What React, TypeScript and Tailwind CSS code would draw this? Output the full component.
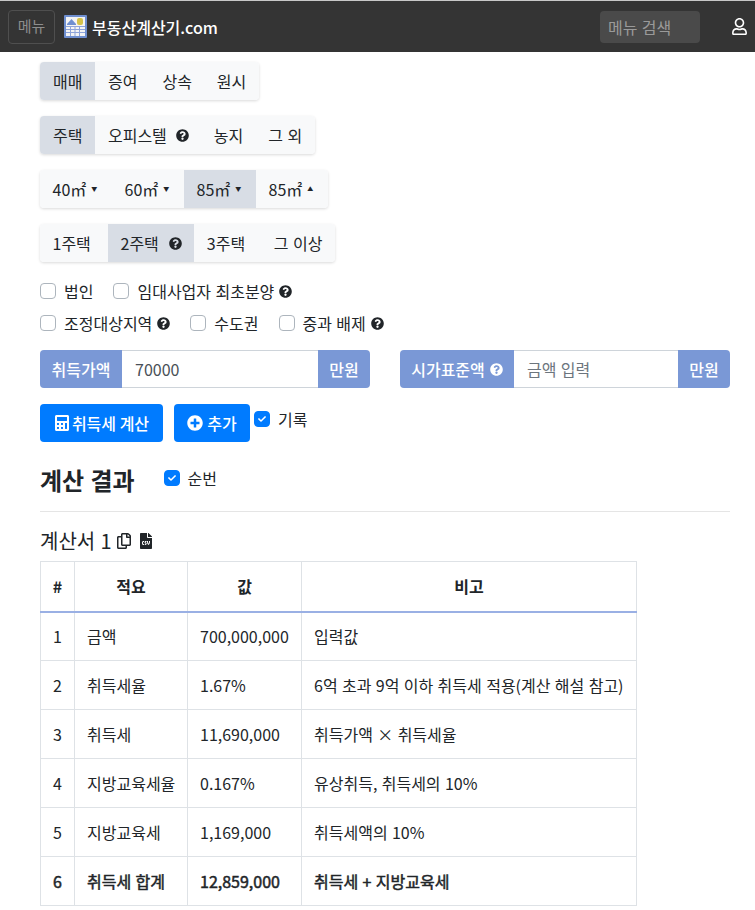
import { FaCalculator, FaCheck, FaFileCsv, FaPlusCircle, FaQuestionCircle, FaRegCopy, FaRegUser } from "react-icons/fa";

const FONT = "font-['Noto_Sans_CJK_KR','Noto_Sans',sans-serif]";

const Help = ({ className = "" }: { className?: string }) => (
  <FaQuestionCircle size={13} className={`inline-block text-[#212529] ${className}`} />
);

function Logo() {
  return (
    <svg width="23" height="23" viewBox="0 0 23 23" className="shrink-0">
      <rect width="23" height="23" rx="1" fill="#6f8fd0" />
      <rect x="2" y="2" width="19" height="19" fill="#f4f4f4" />
      <path d="M3 9 L7.5 4 L12 9 V10 H3 Z" fill="#6f8fd0" />
      <rect x="13" y="3" width="6" height="7" rx="2" fill="#d4c24a" />
      <path d="M2 11.5h19M2 14.5h19M2 17.5h19M6.5 11v10M11 11v10M15.5 11v10" stroke="#8ea4da" strokeWidth="1" />
    </svg>
  );
}

function Group({ items, active, wideFirst }: { items: React.ReactNode[]; active: number; wideFirst?: boolean }) {
  return (
    <div className="flex w-fit rounded shadow-[0_1px_3px_rgba(0,0,0,0.15)]">
      {items.map((item, i) => (
        <div
          key={i}
          className={`h-[38px] flex items-center justify-start text-[#212529] ${
            i === 0 && wideFirst ? "px-[13px]" : "px-[12.5px]"
          } ${i === active ? "bg-[#d8dde5]" : "bg-[#f8f9fa]"} ${i === 0 ? "rounded-l" : ""} ${
            i === items.length - 1 ? "rounded-r" : ""
          }`}
        >
          {item}
        </div>
      ))}
    </div>
  );
}

const Area = ({ n, up }: { n: number; up?: boolean }) => (
  <span className="flex items-center w-[47px]">
    {n}㎡
    <span className="ml-[5px] w-[6px] text-[6px] leading-none">{up ? "▲" : "▼"}</span>
  </span>
);

function Check({ label, checked, help }: { label: string; checked?: boolean; help?: boolean }) {
  return (
    <label className="flex items-center text-[#212529]">
      <span
        className={`w-4 h-4 rounded-[4px] flex items-center justify-center border ${
          checked ? "bg-[#007bff] border-[#007bff]" : "bg-white border-[#adb5bd]"
        }`}
      >
        {checked && <FaCheck size={8} className="text-white" />}
      </span>
      <span className="ml-2">{label}</span>
      {help && <Help className="ml-[5px]" />}
    </label>
  );
}

function InputGroup({
  label,
  value,
  placeholder,
  help,
  labelWidth,
}: {
  label: string;
  value?: string;
  placeholder?: string;
  help?: boolean;
  labelWidth: string;
}) {
  return (
    <div className="flex h-[38px] flex-1">
      <div className={`${labelWidth} bg-[#7a98d6] text-white rounded-l flex items-center justify-center font-medium shrink-0`}>
        {label}
        {help && <FaQuestionCircle size={13} className="ml-[5px] text-white" />}
      </div>
      <div className="flex-1 border-y border-[#ced4da] px-[13px] flex items-center">
        {value ? <span className="text-[#495057]">{value}</span> : <span className="text-[#6c757d]">{placeholder}</span>}
      </div>
      <div className="w-[52px] bg-[#7a98d6] text-white rounded-r flex items-center justify-center font-medium shrink-0">
        만원
      </div>
    </div>
  );
}

const rows = [
  ["1", "금액", "700,000,000", "입력값"],
  ["2", "취득세율", "1.67%", "6억 초과 9억 이하 취득세 적용(계산 해설 참고)"],
  ["3", "취득세", "11,690,000", "취득가액 × 취득세율"],
  ["4", "지방교육세율", "0.167%", "유상취득, 취득세의 10%"],
  ["5", "지방교육세", "1,169,000", "취득세액의 10%"],
  ["6", "취득세 합계", "12,859,000", "취득세 + 지방교육세"],
];

export default function App() {
  return (
    <div className={`${FONT} text-base text-[#212529] bg-white min-h-[910px] overflow-hidden [word-spacing:0.8px]`}>
      <nav className="h-[52px] bg-[#343434] border-t border-[#c8c8c8] flex items-center pl-2 pr-[7px]">
        <div className="w-[47px] h-[34px] border border-[#4f4f4f] rounded flex items-center justify-center text-[#8d8d8d] text-[15px]">
          메뉴
        </div>
        <div className="ml-[9px]"><Logo /></div>
        <div className="ml-[5px] text-white font-medium">부동산계산기.com</div>
        <div className="ml-auto w-[100px] h-8 bg-[#4a4a4a] rounded flex items-center px-2 text-[#9a9a9a]">메뉴 검색</div>
        <FaRegUser size={17} className="ml-[31px] text-white" />
      </nav>

      <main className="pl-10 pr-[25px] pt-[10px]">
        <div className="flex flex-col gap-4">
          <Group active={0} wideFirst items={["매매", "증여", "상속", "원시"]} />
          <Group
            active={0}
            wideFirst
            items={[
              "주택",
              <span className="flex items-center">오피스텔<Help className="ml-[9px]" /></span>,
              "농지",
              "그 외",
            ]}
          />
          <Group
            active={2}
            items={[<Area n={40} />, <Area n={60} />, <Area n={85} />, <Area n={85} up />]}
          />
          <Group
            active={1}
            items={[
              <span className="w-[43px]">1주택</span>,
              <span className="flex items-center">2주택<Help className="ml-[10px]" /></span>,
              <span className="w-[42px]">3주택</span>,
              <span className="whitespace-nowrap">그 이상</span>,
            ]}
          />
        </div>

        <div className="flex gap-[20px] h-8 items-center mt-[13px]">
          <Check label="법인" />
          <Check label="임대사업자 최초분양" help />
        </div>
        <div className="flex gap-[20px] h-8 items-center">
          <Check label="조정대상지역" help />
          <Check label="수도권" />
          <Check label="중과 배제" help />
        </div>

        <div className="flex gap-[30px] mt-[11px]">
          <InputGroup label="취득가액" value="70000" labelWidth="w-[82px]" />
          <InputGroup label="시가표준액" placeholder="금액 입력" help labelWidth="w-[114px]" />
        </div>

        <div className="flex mt-4 items-start">
          <button className="h-[38px] w-[123px] bg-[#007bff] text-white rounded flex items-center justify-center font-medium">
            <FaCalculator size={16} className="mr-[2px]" />
            취득세 계산
          </button>
          <button className="h-[38px] w-[76px] ml-[11px] bg-[#007bff] text-white rounded flex items-center justify-center font-medium">
            <FaPlusCircle size={16} className="mr-1" />
            추가
          </button>
          <div className="ml-1 h-[30px] flex items-center">
            <Check label="기록" checked />
          </div>
        </div>

        <div className="flex items-center mt-[20px] h-9">
          <h2 className="text-2xl font-bold leading-9">계산 결과</h2>
          <div className="ml-[29px] -mt-1">
            <Check label="순번" checked />
          </div>
        </div>

        <hr className="mt-[13px] border-[#e5e5e5]" />

        <div className="flex items-center h-6 mt-[17px] text-xl">
          계산서 1
          <FaRegCopy size={16} className="ml-1" />
          <FaFileCsv size={16} className="ml-[6px]" />
        </div>

        <table className="mt-2 border-collapse w-[597px] table-fixed">
          <thead>
            <tr className="h-[50px] font-bold">
              <th className="w-[34px] border border-[#dee2e6] border-b-2 border-b-[#9ab0e4]">#</th>
              <th className="w-[113px] border border-[#dee2e6] border-b-2 border-b-[#9ab0e4]">적요</th>
              <th className="w-[114px] border border-[#dee2e6] border-b-2 border-b-[#9ab0e4]">값</th>
              <th className="border border-[#dee2e6] border-b-2 border-b-[#9ab0e4]">비고</th>
            </tr>
          </thead>
          <tbody>
            {rows.map((r, i) => (
              <tr key={r[0]} className={`h-[49px] ${i === 5 ? "[-webkit-text-stroke:0.5px_#212529]" : ""}`}>
                <td className="border border-[#dee2e6] px-3">{r[0]}</td>
                <td className="border border-[#dee2e6] px-3 whitespace-nowrap">{r[1]}</td>
                <td className="border border-[#dee2e6] px-3">{r[2]}</td>
                <td className="border border-[#dee2e6] px-3 whitespace-nowrap">{r[3]}</td>
              </tr>
            ))}
          </tbody>
        </table>
      </main>
    </div>
  );
}
